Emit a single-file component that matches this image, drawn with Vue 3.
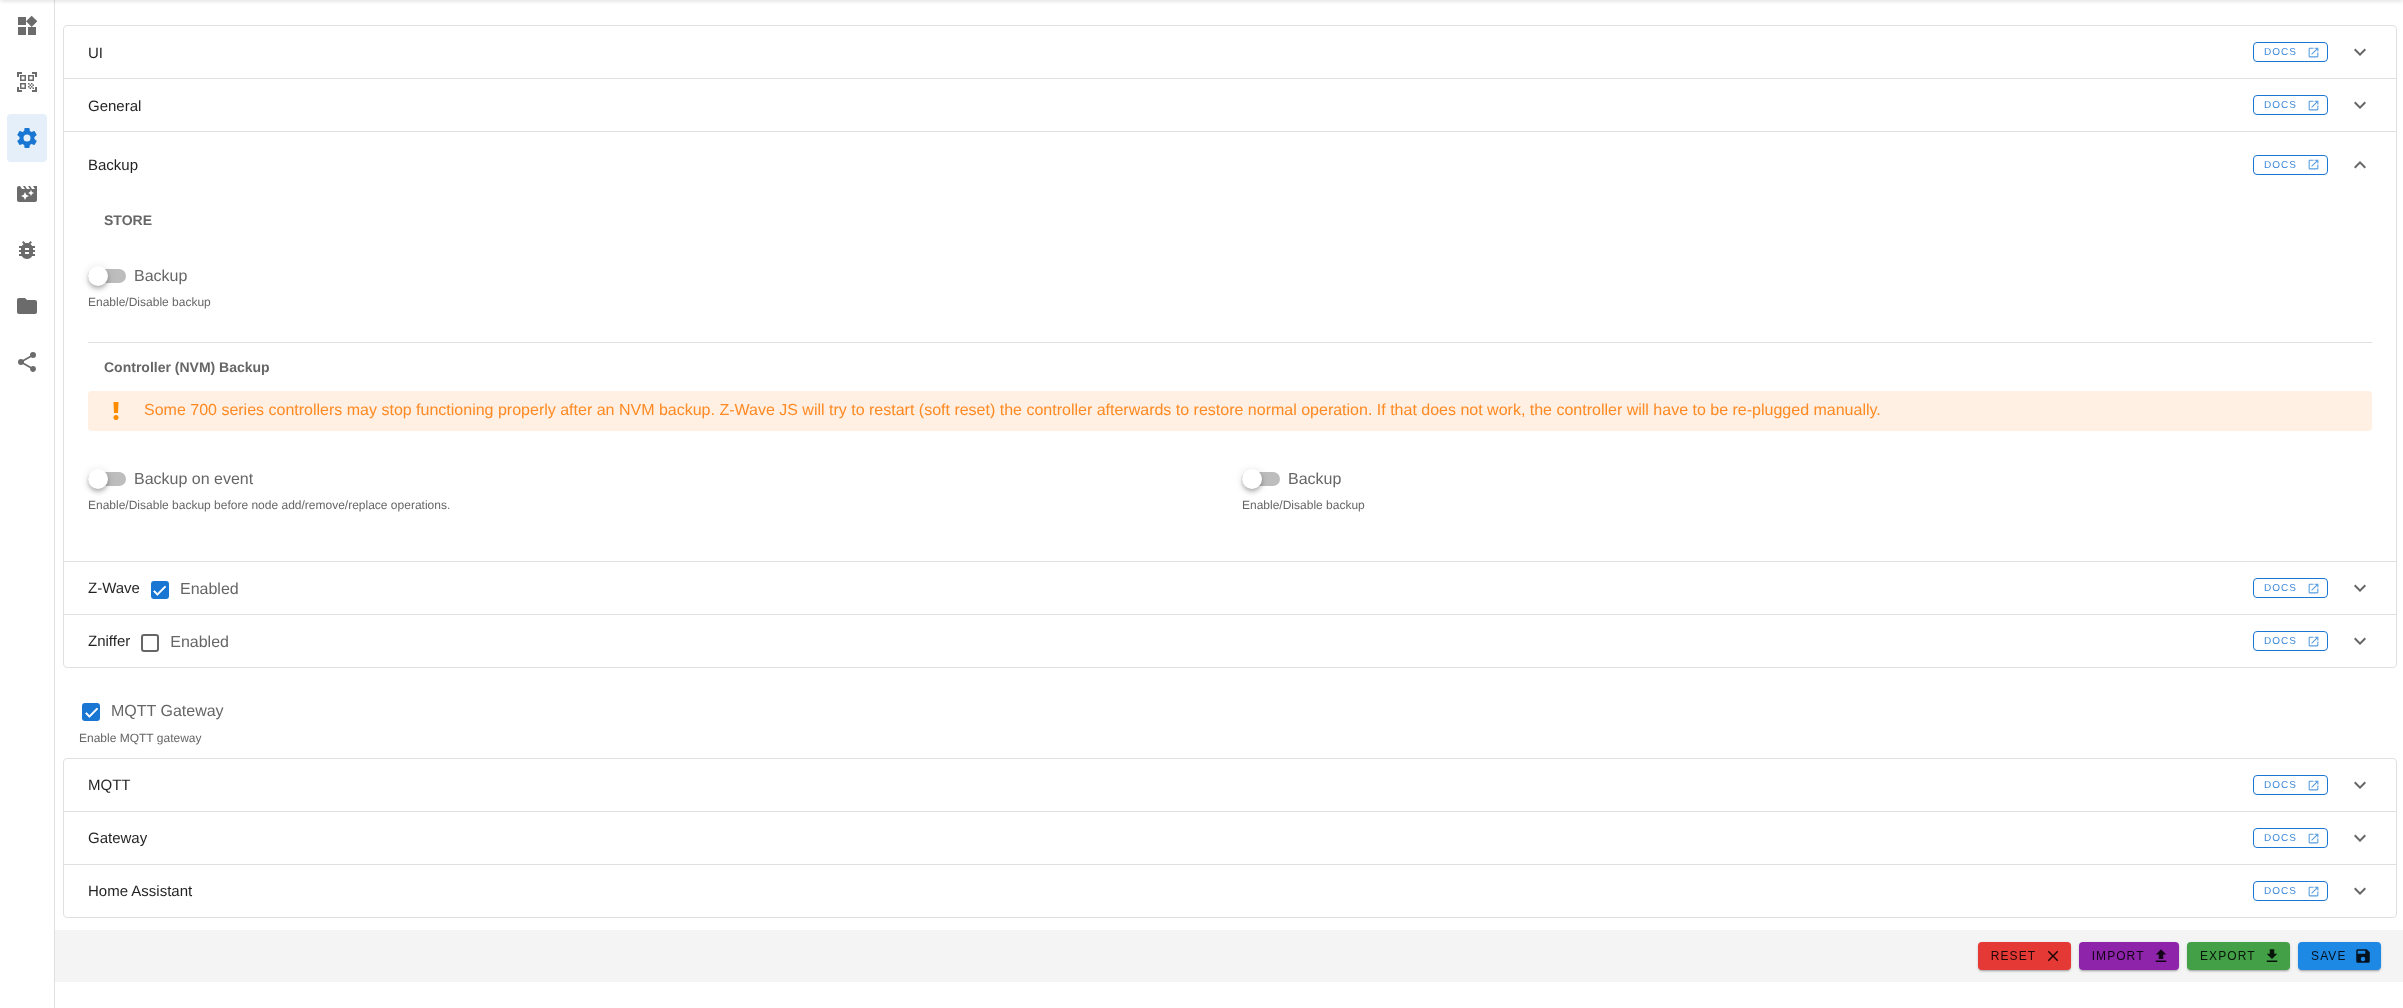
<script setup>
const ICON = {
  widgets: 'M13 13v8h8v-8h-8zM3 21h8v-8H3v8zM3 3v8h8V3H3zm13.66-1.31L11 7.34 16.66 13l5.66-5.66-5.66-5.65z',
  qr: 'M9.5 6.5v3h-3v-3h3M11 5H5v6h6V5zm-1.5 9.5v3h-3v-3h3M11 13H5v6h6v-6zm6.5-6.5v3h-3v-3h3M19 5h-6v6h6V5zm-6 8h1.5v1.5H13V13zm1.5 1.5H16V16h-1.5v-1.5zM16 13h1.5v1.5H16V13zm-3 3h1.5v1.5H13V16zm1.5 1.5H16V19h-1.5v-1.5zM16 16h1.5v1.5H16V16zm1.5-1.5H19V16h-1.5v-1.5zm0 3H19V19h-1.5v-1.5zM22 7h-2V4h-3V2h5v5zm0 15v-5h-2v3h-3v2h5zM2 22h5v-2H4v-3H2v5zM2 2v5h2V4h3V2H2z',
  cog: 'M12,15.5A3.5,3.5 0 0,1 8.5,12A3.5,3.5 0 0,1 12,8.5A3.5,3.5 0 0,1 15.5,12A3.5,3.5 0 0,1 12,15.5M19.43,12.97C19.47,12.65 19.5,12.33 19.5,12C19.5,11.67 19.47,11.34 19.43,11L21.54,9.37C21.73,9.22 21.78,8.95 21.66,8.73L19.66,5.27C19.54,5.05 19.27,4.96 19.05,5.05L16.56,6.05C16.04,5.66 15.5,5.32 14.87,5.07L14.5,2.42C14.46,2.18 14.25,2 14,2H10C9.75,2 9.54,2.18 9.5,2.42L9.13,5.07C8.5,5.32 7.96,5.66 7.44,6.05L4.95,5.05C4.73,4.96 4.46,5.05 4.34,5.27L2.34,8.73C2.21,8.95 2.27,9.22 2.46,9.37L4.57,11C4.53,11.34 4.5,11.67 4.5,12C4.5,12.33 4.53,12.65 4.57,12.97L2.46,14.63C2.27,14.78 2.21,15.05 2.34,15.27L4.34,18.73C4.46,18.95 4.73,19.03 4.95,18.95L7.44,17.94C7.96,18.34 8.5,18.68 9.13,18.93L9.5,21.58C9.54,21.82 9.75,22 10,22H14C14.25,22 14.46,21.82 14.5,21.58L14.87,18.93C15.5,18.67 16.04,18.34 16.56,17.94L19.05,18.95C19.27,19.03 19.54,18.95 19.66,18.73L21.66,15.27C21.78,15.05 21.73,14.78 21.54,14.63L19.43,12.97Z',
  movie: 'M18 4l2 3h-3l-2-3h-2l2 3h-3l-2-3H8l2 3H7L5 4H4c-1.1 0-1.99.9-1.99 2L2 18c0 1.1.9 2 2 2h16c1.1 0 2-.9 2-2V4h-4zm-6.75 11.25L10 18l-1.25-2.75L6 14l2.75-1.25L10 10l1.25 2.75L14 14l-2.75 1.25zm5.69-3.31L16 14l-.94-2.06L13 11l2.06-.94L16 8l.94 2.06L19 11l-2.06.94z',
  bug: 'M20 8h-2.81c-.45-.78-1.07-1.45-1.82-1.96L17 4.41 15.59 3l-2.17 2.17C12.96 5.06 12.49 5 12 5c-.49 0-.96.06-1.41.17L8.41 3 7 4.41l1.62 1.63C7.88 6.55 7.26 7.22 6.81 8H4v2h2.09c-.05.33-.09.66-.09 1v1H4v2h2v1c0 .34.04.67.09 1H4v2h2.81c1.04 1.79 2.97 3 5.19 3s4.15-1.21 5.19-3H20v-2h-2.09c.05-.33.09-.66.09-1v-1h2v-2h-2v-1c0-.34-.04-.67-.09-1H20V8zm-6 8h-4v-2h4v2zm0-4h-4v-2h4v2z',
  folder: 'M10 4H4c-1.1 0-1.99.9-1.99 2L2 18c0 1.1.9 2 2 2h16c1.1 0 2-.9 2-2V8c0-1.1-.9-2-2-2h-8l-2-2z',
  share: 'M18,16.08C17.24,16.08 16.56,16.38 16.04,16.85L8.91,12.7C8.96,12.47 9,12.24 9,12C9,11.76 8.96,11.53 8.91,11.3L15.96,7.19C16.5,7.69 17.21,8 18,8A3,3 0 0,0 21,5A3,3 0 0,0 18,2A3,3 0 0,0 15,5C15,5.24 15.04,5.47 15.09,5.7L8.04,9.81C7.5,9.31 6.79,9 6,9A3,3 0 0,0 3,12A3,3 0 0,0 6,15C6.79,15 7.5,14.69 8.04,14.19L15.16,18.34C15.11,18.55 15.08,18.77 15.08,19C15.08,20.61 16.39,21.91 18,21.91C19.61,21.91 20.92,20.61 20.92,19A2.92,2.92 0 0,0 18,16.08Z',
  open: 'M14,3V5H17.59L7.76,14.83L9.17,16.24L19,6.41V10H21V3M19,19H5V5H12V3H5C3.89,3 3,3.9 3,5V19A2,2 0 0,0 5,21H19A2,2 0 0,0 21,19V12H19V19Z',
  down: 'M7.41,8.58L12,13.17L16.59,8.58L18,10L12,16L6,10L7.41,8.58Z',
  up: 'M7.41,15.41L12,10.83L16.59,15.41L18,14L12,8L6,14L7.41,15.41Z',
  check: 'M21,7L9,19L3.5,13.5L4.91,12.09L9,16.17L19.59,5.59L21,7Z',
  close: 'M19,6.41L17.59,5L12,10.59L6.41,5L5,6.41L10.59,12L5,17.59L6.41,19L12,13.41L17.59,19L19,17.59L13.41,12L19,6.41Z',
  upload: 'M9,16V10H5L12,3L19,10H15V16H9M5,20V18H19V20H5Z',
  download: 'M5,20H19V18H5M19,9H15V3H9V9H5L12,16L19,9Z',
  save: 'M15,9H5V5H15M12,19A3,3 0 0,1 9,16A3,3 0 0,1 12,13A3,3 0 0,1 15,16A3,3 0 0,1 12,19M17,3H5C3.89,3 3,3.9 3,5V19A2,2 0 0,0 5,21H19A2,2 0 0,0 21,19V7L17,3Z',
  alert: 'M9.5 3H14.5L14 14H10ZM14.5 18.5A2.5 2.5 0 1 1 9.5 18.5A2.5 2.5 0 1 1 14.5 18.5Z'
}
const nav = ['widgets', 'qr', 'cog', 'movie', 'bug', 'folder', 'share']
const actions = [
  { label: 'RESET', icon: 'close', cls: 'red' },
  { label: 'IMPORT', icon: 'upload', cls: 'purple' },
  { label: 'EXPORT', icon: 'download', cls: 'green' },
  { label: 'SAVE', icon: 'save', cls: 'blue' }
]
</script>

<template>
  <div class="app">
    <div class="topshade"></div>
    <aside class="side">
      <div v-for="n in nav" :key="n" class="nav" :class="{ active: n === 'cog' }">
        <svg viewBox="0 0 24 24" class="i24"><path :d="ICON[n]" /></svg>
      </div>
    </aside>
    <main class="main">
      <section class="panels">
        <div class="row"><span class="title low">UI</span><a class="docs"><span class="docstext">DOCS</span><svg viewBox="0 0 24 24"><path :d="ICON.open" /></svg></a><svg viewBox="0 0 24 24" class="chev"><path :d="ICON.down" /></svg></div>
        <div class="row"><span class="title low">General</span><a class="docs"><span class="docstext">DOCS</span><svg viewBox="0 0 24 24"><path :d="ICON.open" /></svg></a><svg viewBox="0 0 24 24" class="chev"><path :d="ICON.down" /></svg></div>
        <div class="row open-head"><span class="title low">Backup</span><a class="docs"><span class="docstext">DOCS</span><svg viewBox="0 0 24 24"><path :d="ICON.open" /></svg></a><svg viewBox="0 0 24 24" class="chev"><path :d="ICON.up" /></svg></div>
        <div class="body">
          <div class="sub sub-store">STORE</div>
          <div class="field">
            <label class="switchline"><span class="switch"><span class="track"></span><span class="thumb"></span></span><span class="lab lablow">Backup</span></label>
            <div class="hint">Enable/Disable backup</div>
          </div>
          <hr class="divider" />
          <div class="sub sub-nvm">Controller (NVM) Backup</div>
          <div class="alert">
            <svg viewBox="0 0 24 24"><path :d="ICON.alert" /></svg>
            <span>Some 700 series controllers may stop functioning properly after an NVM backup. Z-Wave JS will try to restart (soft reset) the controller afterwards to restore normal operation. If that does not work, the controller will have to be re-plugged manually.</span>
          </div>
          <div class="cols">
            <div>
              <label class="switchline"><span class="switch"><span class="track"></span><span class="thumb"></span></span><span class="lab lablow">Backup on event</span></label>
              <div class="hint">Enable/Disable backup before node add/remove/replace operations.</div>
            </div>
            <div>
              <label class="switchline"><span class="switch"><span class="track"></span><span class="thumb"></span></span><span class="lab lablow">Backup</span></label>
              <div class="hint">Enable/Disable backup</div>
            </div>
          </div>
        </div>
        <div class="row">
          <span class="title">Z-Wave</span>
          <span class="box on lowered"><svg viewBox="0 0 24 24"><path :d="ICON.check" /></svg></span><span class="lab lowered">Enabled</span>
          <a class="docs"><span class="docstext">DOCS</span><svg viewBox="0 0 24 24"><path :d="ICON.open" /></svg></a><svg viewBox="0 0 24 24" class="chev"><path :d="ICON.down" /></svg>
        </div>
        <div class="row">
          <span class="title">Zniffer</span>
          <span class="box lowered"></span><span class="lab lowered">Enabled</span>
          <a class="docs"><span class="docstext">DOCS</span><svg viewBox="0 0 24 24"><path :d="ICON.open" /></svg></a><svg viewBox="0 0 24 24" class="chev"><path :d="ICON.down" /></svg>
        </div>
      </section>

      <div class="gateway">
        <div class="gwline"><span class="box on"><svg viewBox="0 0 24 24"><path :d="ICON.check" /></svg></span><span class="lab">MQTT Gateway</span></div>
        <div class="hint">Enable MQTT gateway</div>
      </div>

      <section class="panels">
        <div class="row"><span class="title">MQTT</span><a class="docs"><span class="docstext">DOCS</span><svg viewBox="0 0 24 24"><path :d="ICON.open" /></svg></a><svg viewBox="0 0 24 24" class="chev"><path :d="ICON.down" /></svg></div>
        <div class="row"><span class="title">Gateway</span><a class="docs"><span class="docstext">DOCS</span><svg viewBox="0 0 24 24"><path :d="ICON.open" /></svg></a><svg viewBox="0 0 24 24" class="chev"><path :d="ICON.down" /></svg></div>
        <div class="row"><span class="title">Home Assistant</span><a class="docs"><span class="docstext">DOCS</span><svg viewBox="0 0 24 24"><path :d="ICON.open" /></svg></a><svg viewBox="0 0 24 24" class="chev"><path :d="ICON.down" /></svg></div>
      </section>

      <footer class="bar">
        <button v-for="a in actions" :key="a.label" class="btn" :class="a.cls">
          {{ a.label }}<svg viewBox="0 0 24 24"><path :d="ICON[a.icon]" /></svg>
        </button>
      </footer>
    </main>
  </div>
</template>

<style>
html, body { margin: 0; background: #fff; }
</style>

<style scoped>
.app {
  position: relative;
  display: flex;
  width: 2403px;
  height: 1008px;
  overflow: hidden;
  font-family: "Liberation Sans", Arial, sans-serif;
  text-rendering: geometricPrecision;
  color: rgba(0, 0, 0, 0.87);
}
.topshade {
  position: absolute;
  left: 0;
  right: 0;
  top: -4px;
  height: 4px;
  box-shadow: 0 1px 4px rgba(0, 0, 0, 0.14);
}
.side {
  box-sizing: border-box;
  flex: none;
  width: 55px;
  border-right: 1px solid #e0e0e0;
  padding: 2px 7px 0;
  display: flex;
  flex-direction: column;
  gap: 8px;
}
.nav {
  width: 40px;
  height: 48px;
  border-radius: 4px;
  display: flex;
  align-items: center;
  justify-content: center;
  fill: #6b6b6b;
}
.nav.active {
  background: #e4eff9;
  fill: #1976d2;
}
.i24 { width: 24px; height: 24px; display: block; }
.main {
  flex: 1;
  min-width: 0;
  padding: 25px 0 0;
  display: flex;
  flex-direction: column;
  align-items: stretch;
  will-change: transform;
}
.panels {
  box-sizing: border-box;
  margin: 0 6px 0 8px;
  border: 1px solid #e0e0e0;
  border-radius: 4px;
}
.row {
  box-sizing: border-box;
  height: 53px;
  padding: 0 24px;
  display: flex;
  align-items: center;
  font-size: 15px;
  border-top: 1px solid #e0e0e0;
}
.panels > .row:first-child { border-top: 0; height: 52px; }
.open-head { height: 66px; }
.title { line-height: 1; }
.title.low { padding-top: 2px; }
.docs {
  box-sizing: border-box;
  margin-left: auto;
  width: 75px;
  height: 20px;
  border: 1px solid #1976d2;
  border-radius: 4px;
  display: flex;
  align-items: center;
  padding-left: 10px;
  color: #3a87d8;
  font-size: 10px;
  letter-spacing: 1px;
}
.docstext { padding-top: 2px; line-height: 1; }
.docs svg {
  width: 13px;
  height: 13px;
  margin-left: auto;
  margin-right: 7px;
  fill: #5a9de0;
}
.chev {
  width: 24px;
  height: 24px;
  margin-left: 20px;
  margin-right: 0;
  fill: #666;
}
.body {
  padding: 0 24px 49px;
}
.sub {
  font-size: 14px;
  font-weight: 700;
  color: #666;
  padding-left: 16px;
  line-height: 20px;
}
.sub-store { padding-top: 13px; }
.sub-nvm { margin-top: 14px; }
.field { margin-top: 34px; }
.switchline {
  display: flex;
  align-items: center;
  height: 24px;
}
.switch {
  position: relative;
  flex: none;
  width: 38px;
  height: 24px;
  margin-right: 8px;
}
.track {
  position: absolute;
  left: 0;
  top: 5px;
  width: 38px;
  height: 14px;
  border-radius: 7px;
  background: #bdbdbd;
}
.thumb {
  position: absolute;
  left: 0;
  top: 2px;
  width: 20px;
  height: 20px;
  border-radius: 50%;
  background: #fff;
  box-shadow: 0 2px 4px -1px rgba(0,0,0,.2), 0 4px 5px rgba(0,0,0,.14), 0 1px 10px rgba(0,0,0,.12);
}
.lab { font-size: 16px; color: #666; }
.lablow { padding-top: 2px; }
.hint {
  font-size: 12px;
  color: #666;
  line-height: 14px;
  margin-top: 7px;
}
.divider {
  border: 0;
  border-top: 1px solid #e0e0e0;
  margin: 33px 0 0;
}
.alert {
  box-sizing: border-box;
  margin-top: 14px;
  height: 40px;
  border-radius: 4px;
  background: #fff0e3;
  color: #ff8a24;
  font-size: 16px;
  display: flex;
  align-items: center;
  padding-left: 16px;
}
.alert svg {
  width: 24px;
  height: 24px;
  fill: #fb8c00;
  flex: none;
  margin-right: 16px;
}
.cols {
  display: grid;
  grid-template-columns: 1fr 1fr;
  column-gap: 24px;
  margin-top: 36px;
}
.box {
  box-sizing: border-box;
  flex: none;
  width: 18px;
  height: 18px;
  border: 2px solid #666;
  border-radius: 3px;
  margin-left: 11px;
  margin-right: 11px;
  display: inline-flex;
  align-items: center;
  justify-content: center;
}
.box.on {
  background: #1976d2;
  border-color: #1976d2;
}
.box svg {
  width: 17px;
  height: 17px;
  fill: #fff;
  stroke: #fff;
  stroke-width: 1;
  flex: none;
}
.lowered { margin-top: 4px; }
.gateway {
  margin: 32px 0 0 24px;
  height: 58px;
}
.gwline {
  display: flex;
  align-items: center;
  height: 24px;
}
.gateway .box { margin-left: 3px; }
.bar {
  box-sizing: border-box;
  margin-top: 12px;
  height: 52px;
  background: #f4f4f4;
  display: flex;
  align-items: center;
  justify-content: flex-end;
  gap: 8px;
  padding-right: 22px;
}
.btn {
  box-sizing: border-box;
  height: 28px;
  border: 0;
  border-radius: 4px;
  padding: 0 9px 0 13px;
  display: flex;
  align-items: center;
  gap: 7.5px;
  font-family: inherit;
  font-size: 12px;
  letter-spacing: 1.07px;
  color: rgba(0, 0, 0, 0.87);
  box-shadow: 0 2px 2px -1px rgba(0,0,0,.25), 0 1px 3px rgba(0,0,0,.14);
}
.btn svg { width: 18px; height: 18px; fill: rgba(0,0,0,.87); flex: none; }
.red { background: #e53935; }
.purple { background: #8e24aa; }
.green { background: #43a047; }
.blue { background: #1e88e5; }
</style>
